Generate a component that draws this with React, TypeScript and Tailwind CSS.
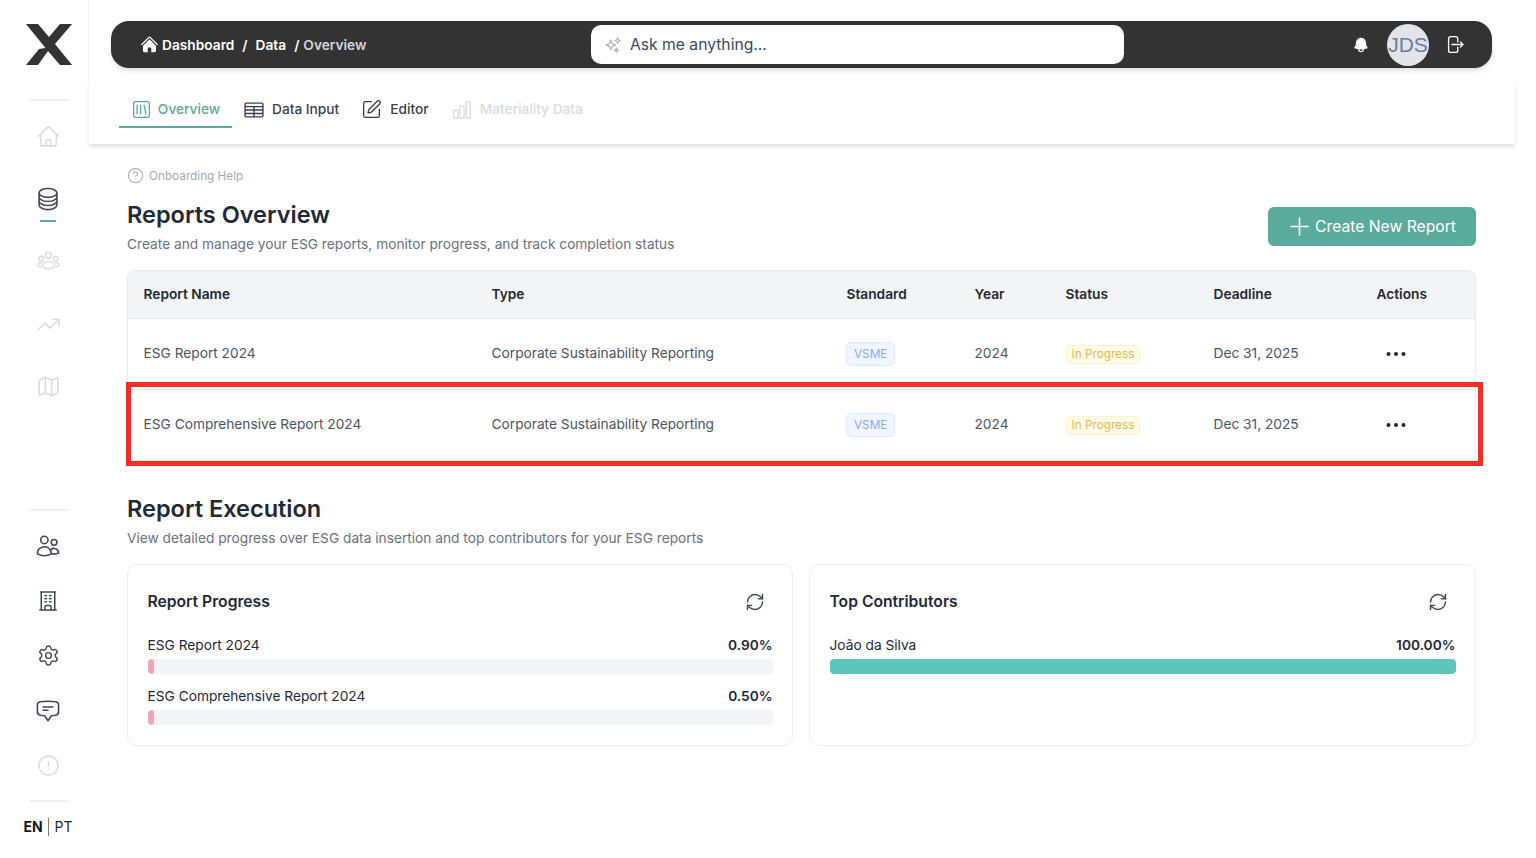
import type { ReactNode } from "react";
import {
  TrendingUp,
  Map as MapIcon,
  Settings,
  CircleAlert,
  SquareLibrary,
  SquarePen,
  CircleHelp,
  Plus,
  RefreshCw,
} from "lucide-react";
import {
  HiHome,
  HiBell,
  HiOutlineHome,
  HiOutlineCircleStack,
  HiOutlineSparkles,
  HiOutlineTableCells,
  HiOutlineChartBar,
  HiOutlineUsers,
  HiOutlineBuildingOffice,
  HiOutlineChatBubbleBottomCenterText,
  HiOutlineArrowRightOnRectangle,
} from "react-icons/hi2";

const REPORTS = [
  { name: "ESG Report 2024" },
  { name: "ESG Comprehensive Report 2024" },
];

const HEADERS = ["Report Name", "Type", "Standard", "Year", "Status", "Deadline", "Actions"];

// three heads with a wide body in front, no package has this exact one
function TeamIcon() {
  return (
    <svg width="23" height="23" viewBox="0 0 24 24" fill="none" stroke="currentColor" strokeWidth="1.5">
      <circle cx="12" cy="5.5" r="3.2" />
      <circle cx="4.6" cy="9" r="2.4" />
      <circle cx="19.4" cy="9" r="2.4" />
      <ellipse cx="12" cy="16" rx="6.2" ry="3.6" />
      <path d="M5.4 13c-2.8 0-4.6 1-4.6 2.2s1.6 2.2 4.2 2.2" />
      <path d="M18.6 13c2.8 0 4.6 1 4.6 2.2s-1.6 2.2-4.2 2.2" />
    </svg>
  );
}

function Sidebar() {
  return (
    <aside className="flex w-[89px] shrink-0 flex-col items-center">
      <div className="flex h-[83px] w-full items-start justify-center border-r border-[#f3f4f6] pl-[9px] pt-[24px]">
        <svg width="46" height="41" viewBox="0 0 46 41" className="text-[#333333]" fill="currentColor">
          <polygon points="0,0 12,0 23,13 34,0 46,0 29,20 46,41 34,41 22,27 12,41 0,41 13,25 19.5,24" />
        </svg>
      </div>
      <div className="w-full pl-[7px]">
        <div className="mx-auto mt-[16px] h-[2px] w-[39px] bg-[#f0f0f2]" />
        <div className="mt-[4px] flex flex-col items-center text-[#d8dbe2]">
          <div className="flex h-[62px] items-center">
            <HiOutlineHome size={25} />
          </div>
          <div className="relative flex h-[63px] items-center text-[#414a5c]">
            <HiOutlineCircleStack size={26} />
            <div className="absolute bottom-[8px] left-[5px] h-[2px] w-4 bg-[#5bab9c]" />
          </div>
          <div className="flex h-[63px] items-center">
            <TeamIcon />
          </div>
          <div className="flex h-[62px] items-center">
            <TrendingUp size={25} strokeWidth={1.5} />
          </div>
          <div className="flex h-[63px] items-center">
            <MapIcon size={25} strokeWidth={1.5} />
          </div>
        </div>
        <div className="mx-auto mt-[91px] h-[2px] w-[39px] bg-[#f0f0f2]" />
        <div className="mt-[7px] flex flex-col items-center text-[#414a5c]">
          <div className="flex h-[55px] items-center">
            <HiOutlineUsers size={26} />
          </div>
          <div className="flex h-[55px] items-center">
            <HiOutlineBuildingOffice size={24} />
          </div>
          <div className="flex h-[55px] items-center">
            <Settings size={23} strokeWidth={1.5} />
          </div>
          <div className="flex h-[55px] items-center">
            <HiOutlineChatBubbleBottomCenterText size={26} />
          </div>
          <div className="flex h-[55px] items-center text-[#d8dbe2]">
            <CircleAlert size={23} strokeWidth={1.5} />
          </div>
        </div>
        <div className="mx-auto mt-[7px] h-[2px] w-[39px] bg-[#f0f0f2]" />
        <div className="mt-[15px] flex items-center justify-center text-[14px] leading-[20px] text-[#1f2937]">
          <span className="font-bold text-[#111827]">EN</span>
          <span className="ml-[5px] mr-[6px] h-[18px] w-px bg-[#8a7a66]" />
          <span>PT</span>
        </div>
      </div>
    </aside>
  );
}

function TopBar() {
  return (
    <div className="relative ml-[22px] mt-[21px] flex h-[47px] w-[1381px] items-center rounded-[18px] bg-[#333333] pl-[29px] pr-[27px] shadow-md">
      <div className="flex w-[451px] items-center pt-[1px] text-[13.72px] font-semibold text-white">
        <HiHome size={19} className="mr-[3px]" />
        <span>Dashboard</span>
        <span className="mx-[8px]">/</span>
        <span>Data</span>
        <span className="ml-[8px] mr-[4px]">/</span>
        <span className="text-[#d1d5db]">Overview</span>
      </div>
      <div className="flex h-[39px] w-[533px] items-center rounded-[10px] bg-white pl-[13px]">
        <HiOutlineSparkles size={18} className="text-[#a9b0bf]" />
        <span className="ml-[8px] text-[15.68px] text-[#414a5c]">Ask me anything...</span>
      </div>
      <div className="ml-auto flex items-center text-white">
        <HiBell size={18} />
        <div className="ml-[17px] flex h-[42px] w-[42px] items-center justify-center rounded-full bg-[#e2e4ea] text-[21px] text-[#6b7f9e] font-['Liberation_Sans',sans-serif]">
          JDS
        </div>
        <HiOutlineArrowRightOnRectangle size={21} className="ml-[15px]" />
      </div>
    </div>
  );
}

function Tabs() {
  return (
    <div className="mt-[13px] flex h-[63px] items-start pl-[30px] shadow-[0_3px_4px_rgba(0,0,0,0.12)] text-[13.72px] font-medium">
      <div className="flex h-[47px] w-[113px] items-center justify-center gap-[6px] border-b-2 border-[#5bab9c] pt-[12px] text-[#5bab9c]">
        <SquareLibrary size={21} strokeWidth={1.5} />
        Overview
      </div>
      <div className="ml-[11px] flex h-[47px] items-center gap-[7px] pt-[10px] text-[#374151]">
        <HiOutlineTableCells size={22} />
        Data Input
      </div>
      <div className="ml-[22px] flex h-[47px] items-center gap-[8px] pt-[10px] text-[#374151]">
        <SquarePen size={21} strokeWidth={1.5} />
        Editor
      </div>
      <div className="ml-[22px] flex h-[47px] items-center gap-[7px] pt-[10px] text-[#d8dbe2]">
        <HiOutlineChartBar size={22} />
        Materiality Data
      </div>
    </div>
  );
}

function ReportsTable() {
  return (
    <div className="mt-[16px] overflow-hidden rounded-lg border border-[#e8e9ed]">
      <table className="w-full table-fixed border-collapse text-left text-[13.72px]">
        <colgroup>
          <col className="w-[348px]" />
          <col className="w-[355px]" />
          <col className="w-[128px]" />
          <col className="w-[91px]" />
          <col className="w-[148px]" />
          <col className="w-[163px]" />
          <col />
        </colgroup>
        <thead className="bg-[#f3f4f6]">
          <tr className="h-[47px]">
            {HEADERS.map((h) => (
              <th key={h} className="px-[15.5px] font-semibold text-[#1f2937]">
                {h}
              </th>
            ))}
          </tr>
        </thead>
        <tbody className="text-[#4b5563]">
          {REPORTS.map((r) => (
            <tr key={r.name} className="h-[71px] border-t border-[#e8e9ed]">
              <td className="px-[15.5px]">{r.name}</td>
              <td className="px-[15.5px]">Corporate Sustainability Reporting</td>
              <td className="px-[15px]">
                <span className="inline-block rounded-[5px] border border-[#dbeafe] bg-[#eff6ff] px-[7px] py-[2px] text-[11.76px] leading-[18px] text-[#8aaaf0]">
                  VSME
                </span>
              </td>
              <td className="px-[15.5px]">2024</td>
              <td className="px-[15.5px]">
                <span className="inline-block rounded-[5px] border border-[#fef3c7] bg-[#fefbe8] px-[5px] text-[11.76px] leading-[17px] text-[#e5b84e]">
                  In Progress
                </span>
              </td>
              <td className="px-[15.5px]">Dec 31, 2025</td>
              <td className="px-[15.5px]">
                <svg width="20" height="6" viewBox="0 0 20 6" className="ml-[9px] block text-[#1f2937]" fill="currentColor">
                  <circle cx="2.5" cy="3" r="2" />
                  <circle cx="10" cy="3" r="2" />
                  <circle cx="17.5" cy="3" r="2" />
                </svg>
              </td>
            </tr>
          ))}
        </tbody>
      </table>
    </div>
  );
}

function ProgressRow({ label, value, width, color }: { label: string; value: string; width: string; color: string }) {
  return (
    <div className="mb-[12px]">
      <div className="flex items-center justify-between text-[13.72px] leading-[20px] text-[#1f2937]">
        <span>{label}</span>
        <span className="font-semibold">{value}</span>
      </div>
      <div className="mt-[4px] h-[15px] overflow-hidden rounded-[4px] bg-[#f3f4f6]">
        <div className={`h-full rounded-[4px] ${color}`} style={{ width }} />
      </div>
    </div>
  );
}

function Card({ title, className, children }: { title: string; className: string; children: ReactNode }) {
  return (
    <div className={`h-[182px] rounded-[10px] border border-[#eceef1] px-[19.5px] pt-[26px] ${className}`}>
      <div className="flex items-center justify-between">
        <h3 className="text-[15.68px] font-semibold leading-[22px] text-[#1f2937]">{title}</h3>
        <RefreshCw size={20} strokeWidth={1.7} className="mr-[8px] text-[#414a5c]" />
      </div>
      <div className="mt-[22px]">{children}</div>
    </div>
  );
}

export default function App() {
  return (
    <div className="relative flex h-[858px] w-full overflow-hidden bg-white font-['Inter',sans-serif]">
      <Sidebar />
      <main className="w-[1426px] shrink-0">
        <TopBar />
        <Tabs />
        <div className="pl-[38px] pr-[39px] pt-[23px]">
          <div className="flex items-center gap-[5px] text-[11.76px] leading-[16px] text-[#a3a9b6]">
            <CircleHelp size={17} strokeWidth={1.5} />
            Onboarding Help
          </div>
          <div className="mt-[15px] flex items-start justify-between">
            <div>
              <h1 className="text-[23.52px] font-semibold leading-[32px] text-[#1f2937]">Reports Overview</h1>
              <p className="mt-[3px] text-[13.72px] leading-[20px] text-[#6b7280]">
                Create and manage your ESG reports, monitor progress, and track completion status
              </p>
            </div>
            <button
              type="button"
              className="mt-[8px] flex h-[39px] w-[208px] items-center justify-center gap-[1px] rounded-md bg-[#5bab9c] pr-[3px] text-[15.68px] text-white"
            >
              <Plus size={29} strokeWidth={1.3} />
              Create New Report
            </button>
          </div>
          <ReportsTable />
          <h2 className="mt-[32px] text-[23.52px] font-semibold leading-[32px] text-[#1f2937]">Report Execution</h2>
          <p className="mt-[3px] text-[13.72px] leading-[20px] text-[#6b7280]">
            View detailed progress over ESG data insertion and top contributors for your ESG reports
          </p>
          <div className="mt-[16px] flex gap-[16px]">
            <Card title="Report Progress" className="w-[666px]">
              <ProgressRow label="ESG Report 2024" value="0.90%" width="1%" color="bg-[#f2a6b0]" />
              <ProgressRow label="ESG Comprehensive Report 2024" value="0.50%" width="1%" color="bg-[#f2a6b0]" />
            </Card>
            <Card title="Top Contributors" className="flex-1">
              <ProgressRow label="João da Silva" value="100.00%" width="100%" color="bg-[#5cc4b8]" />
            </Card>
          </div>
        </div>
      </main>
      <div className="pointer-events-none absolute left-[126px] top-[382px] h-[84px] w-[1357px] border-[5px] border-[#ee3124]" />
    </div>
  );
}
